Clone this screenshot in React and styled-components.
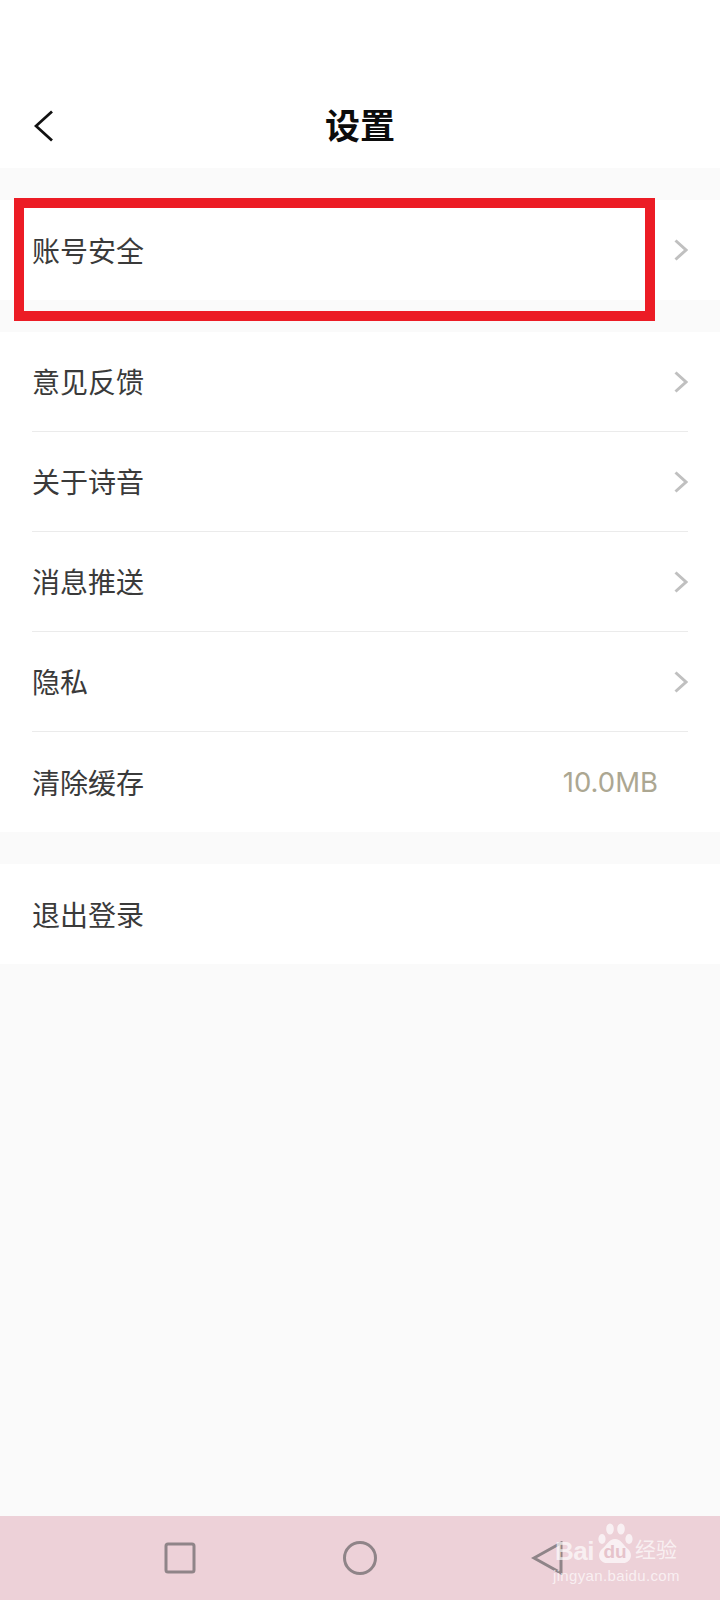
import React from "react";
import styled, { createGlobalStyle } from "styled-components";

const GlobalStyle = createGlobalStyle`
  html, body {
    margin: 0;
    padding: 0;
    background: #fafafa;
  }
`;

const settingsGroups = [
  [{ label: "账号安全", arrow: true }],
  [
    { label: "意见反馈", arrow: true },
    { label: "关于诗音", arrow: true },
    { label: "消息推送", arrow: true },
    { label: "隐私", arrow: true },
    { label: "清除缓存", value: "10.0MB" },
  ],
  [{ label: "退出登录" }],
];

function Chevron() {
  return (
    <ChevronIcon viewBox="0 0 14 22">
      <path d="M1.5 1.5 L12 11 L1.5 20.5" />
    </ChevronIcon>
  );
}

export default function App() {
  return (
    <Page>
      <GlobalStyle />
      <Header>
        <BackIcon viewBox="0 0 20 32">
          <path d="M18 1.5 L2 16 L18 30.5" />
        </BackIcon>
        <Title>设置</Title>
      </Header>
      <Content>
        {settingsGroups.map((group, i) => (
          <Group key={i}>
            {group.map((item) => (
              <Row key={item.label}>
                <Label>{item.label}</Label>
                {item.value && <Value>{item.value}</Value>}
                {item.arrow && <Chevron />}
              </Row>
            ))}
          </Group>
        ))}
        <Highlight />
      </Content>
      <NavBar>
        <NavIcon viewBox="0 0 34 34">
          <rect x="3" y="3" width="28" height="28" rx="2" />
        </NavIcon>
        <NavIcon viewBox="0 0 34 34">
          <circle cx="17" cy="17" r="15.5" />
        </NavIcon>
        <NavIcon viewBox="0 0 34 34">
          <path d="M30 2 L3 17 L30 32 Z" />
        </NavIcon>
        <Watermark>
          <BrandLine>
            <BrandLatin>Bai</BrandLatin>
            <Paw>
              <PawIcon viewBox="0 0 36 40">
                <ellipse cx="5" cy="16" rx="3.6" ry="5" />
                <ellipse cx="13" cy="6" rx="3.8" ry="5.6" />
                <ellipse cx="24" cy="6" rx="3.8" ry="5.6" />
                <ellipse cx="32" cy="16" rx="3.6" ry="5" />
                <path d="M18 16 C24 16 26 22 31 26 C37 32 33 40 26 40 L10 40 C3 40 -1 32 5 26 C10 22 12 16 18 16 Z" />
              </PawIcon>
              <DuText>du</DuText>
            </Paw>
            <BrandCn>经验</BrandCn>
          </BrandLine>
          <BrandUrl>jingyan.baidu.com</BrandUrl>
        </Watermark>
      </NavBar>
    </Page>
  );
}

const Page = styled.div`
  position: relative;
  width: 720px;
  height: 1600px;
  display: flex;
  flex-direction: column;
  background: #fafafa;
  font-family: "Noto Sans CJK SC", "Liberation Sans", sans-serif;
  overflow: hidden;
`;

const Header = styled.header`
  height: 168px;
  flex-shrink: 0;
  box-sizing: border-box;
  padding-top: 80px;
  display: flex;
  align-items: center;
  justify-content: center;
  position: relative;
  background: #fff;
`;

const BackIcon = styled.svg`
  position: absolute;
  left: 34px;
  top: 110px;
  width: 20px;
  height: 32px;
  fill: none;
  stroke: #111;
  stroke-width: 2.8;
`;

const Title = styled.h1`
  margin: 0;
  font-size: 35px;
  line-height: 48px;
  font-weight: 700;
  color: #0c0c0c;
`;

const Content = styled.main`
  position: relative;
  flex: 1;
  padding-top: 32px;
  display: flex;
  flex-direction: column;
  gap: 32px;
`;

const Group = styled.section`
  background: #fff;
  padding: 0 32px;
`;

const Row = styled.div`
  height: 100px;
  box-sizing: border-box;
  display: flex;
  align-items: center;
  justify-content: space-between;
  border-bottom: 1px solid #ebebeb;

  &:last-child {
    border-bottom: none;
  }
`;

const Label = styled.span`
  margin-bottom: 1px;
  font-size: 28px;
  line-height: 40px;
  color: #3a3a3a;
`;

const Value = styled.span`
  margin-right: 30px;
  font-family: "Inter", "Liberation Sans", sans-serif;
  font-size: 27.5px;
  color: #aca792;
`;

const ChevronIcon = styled.svg`
  width: 14px;
  height: 22px;
  fill: none;
  stroke: #c0c0c0;
  stroke-width: 3;
`;

const Highlight = styled.div`
  position: absolute;
  left: 14px;
  top: 30px;
  width: 641px;
  height: 123px;
  box-sizing: border-box;
  border: 10px solid #ec1c25;
`;

const NavBar = styled.nav`
  position: relative;
  height: 84px;
  flex-shrink: 0;
  box-sizing: border-box;
  padding-left: 90px;
  display: grid;
  grid-template-columns: 180px 180px 196px;
  align-items: center;
  justify-items: center;
  background: #edd1d8;
`;

const NavIcon = styled.svg`
  width: 34px;
  height: 34px;
  fill: none;
  stroke: #8f8488;
  stroke-width: 3;
`;

const Watermark = styled.div`
  position: absolute;
  left: 553px;
  top: 7px;
  width: 130px;
  color: rgba(255, 255, 255, 0.68);
  font-family: "Liberation Sans", "Noto Sans CJK SC", sans-serif;
`;

const BrandLine = styled.div`
  height: 40px;
  display: flex;
  align-items: flex-end;
`;

const BrandLatin = styled.span`
  width: 44px;
  padding-left: 2px;
  box-sizing: border-box;
  font-size: 26px;
  line-height: 24px;
  font-weight: 700;
  letter-spacing: -0.5px;
`;

const Paw = styled.div`
  position: relative;
  width: 36px;
  height: 40px;
`;

const PawIcon = styled.svg`
  display: block;
  width: 36px;
  height: 40px;
  fill: rgba(255, 255, 255, 0.68);
`;

const DuText = styled.span`
  position: absolute;
  left: 0;
  right: 0;
  bottom: 1px;
  text-align: center;
  font-size: 19px;
  line-height: 20px;
  font-weight: 700;
  color: #e6c3cb;
`;

const BrandCn = styled.span`
  margin-left: 2px;
  font-size: 21px;
  line-height: 26px;
`;

const BrandUrl = styled.div`
  margin-top: 3px;
  font-size: 15px;
  line-height: 20px;
  letter-spacing: 0.35px;
`;
